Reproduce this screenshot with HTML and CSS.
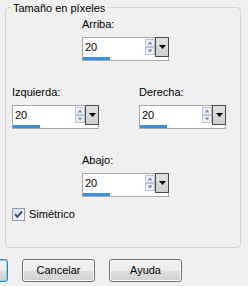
FILE: index.html
```html
<!DOCTYPE html>
<html>
<head>
<meta charset="utf-8">
<link rel="stylesheet" href="styles.css">
</head>
<body>
<div class="dialog">
  <div class="group">
    <span class="legend">Tamaño en píxeles</span>

    <div class="field field-center">
      <div class="label">Arriba:</div>
      <div class="spin">
        <div class="spin-main">
          <span class="spin-value">20</span>
          <svg class="spin-arrows" width="10" height="16" viewBox="0 0 10 16"><rect x="0.5" y="0.5" width="9" height="7" fill="#eef1f6" stroke="#bac3d3"/><rect x="0.5" y="8.5" width="9" height="7" fill="#eef1f6" stroke="#bac3d3"/><path d="M2.5 5.5 L5 2.5 L7.5 5.5Z" fill="#7d8fb4"/><path d="M2.5 10.5 L5 13.5 L7.5 10.5Z" fill="#7d8fb4"/></svg>
          <span class="spin-drop"><svg width="7" height="4" viewBox="0 0 7 4"><path d="M0 0 H7 L3.5 4Z" fill="#000"/></svg></span>
        </div>
        <div class="spin-bar"><span class="spin-fill" style="width:27px"></span></div>
      </div>
    </div>

    <div class="pair">
      <div class="field">
        <div class="label">Izquierda:</div>
        <div class="spin">
          <div class="spin-main">
            <span class="spin-value">20</span>
            <svg class="spin-arrows" width="10" height="16" viewBox="0 0 10 16"><rect x="0.5" y="0.5" width="9" height="7" fill="#eef1f6" stroke="#bac3d3"/><rect x="0.5" y="8.5" width="9" height="7" fill="#eef1f6" stroke="#bac3d3"/><path d="M2.5 5.5 L5 2.5 L7.5 5.5Z" fill="#7d8fb4"/><path d="M2.5 10.5 L5 13.5 L7.5 10.5Z" fill="#7d8fb4"/></svg>
            <span class="spin-drop"><svg width="7" height="4" viewBox="0 0 7 4"><path d="M0 0 H7 L3.5 4Z" fill="#000"/></svg></span>
          </div>
          <div class="spin-bar"><span class="spin-fill" style="width:27px"></span></div>
        </div>
      </div>
      <div class="field">
        <div class="label">Derecha:</div>
        <div class="spin">
          <div class="spin-main">
            <span class="spin-value">20</span>
            <svg class="spin-arrows" width="10" height="16" viewBox="0 0 10 16"><rect x="0.5" y="0.5" width="9" height="7" fill="#eef1f6" stroke="#bac3d3"/><rect x="0.5" y="8.5" width="9" height="7" fill="#eef1f6" stroke="#bac3d3"/><path d="M2.5 5.5 L5 2.5 L7.5 5.5Z" fill="#7d8fb4"/><path d="M2.5 10.5 L5 13.5 L7.5 10.5Z" fill="#7d8fb4"/></svg>
            <span class="spin-drop"><svg width="7" height="4" viewBox="0 0 7 4"><path d="M0 0 H7 L3.5 4Z" fill="#000"/></svg></span>
          </div>
          <div class="spin-bar"><span class="spin-fill" style="width:27px"></span></div>
        </div>
      </div>
    </div>

    <div class="field field-center field-bottom">
      <div class="label">Abajo:</div>
      <div class="spin">
        <div class="spin-main">
          <span class="spin-value">20</span>
          <svg class="spin-arrows" width="10" height="16" viewBox="0 0 10 16"><rect x="0.5" y="0.5" width="9" height="7" fill="#eef1f6" stroke="#bac3d3"/><rect x="0.5" y="8.5" width="9" height="7" fill="#eef1f6" stroke="#bac3d3"/><path d="M2.5 5.5 L5 2.5 L7.5 5.5Z" fill="#7d8fb4"/><path d="M2.5 10.5 L5 13.5 L7.5 10.5Z" fill="#7d8fb4"/></svg>
          <span class="spin-drop"><svg width="7" height="4" viewBox="0 0 7 4"><path d="M0 0 H7 L3.5 4Z" fill="#000"/></svg></span>
        </div>
        <div class="spin-bar"><span class="spin-fill" style="width:27px"></span></div>
      </div>
    </div>

    <div class="check">
      <svg class="check-box" width="13" height="13" viewBox="0 0 13 13"><defs><linearGradient id="cg" x1="0" y1="0" x2="1" y2="1"><stop offset="0" stop-color="#dfe3ea"/><stop offset="1" stop-color="#f7f8fa"/></linearGradient></defs><rect x="0.5" y="0.5" width="12" height="12" fill="url(#cg)" stroke="#8e9bb0"/><path d="M3 6.2 L5.3 8.8 L10 3.6" stroke="#33486e" stroke-width="1.9" fill="none"/></svg>
      <span>Simétrico</span>
    </div>
  </div>

  <div class="buttons">
    <span class="btn btn-default"></span>
    <span class="btn">Cancelar</span>
    <span class="btn">Ayuda</span>
  </div>
</div>
</body>
</html>
```

FILE: styles.css
```css
html, body {
  margin: 0;
  padding: 0;
}

body {
  width: 248px;
  height: 286px;
  overflow: hidden;
  background: #f0f0f0;
  color: #000;
  font-family: "Liberation Sans", Arial, sans-serif;
  font-size: 11px;
  line-height: 13px;
}

.dialog {
  padding-top: 7px;
}

.group {
  position: relative;
  margin-left: 5px;
  width: 236px;
  height: 241px;
  box-sizing: border-box;
  border: 1px solid #d4d4d4;
  border-radius: 4px;
  padding: 10px 0 0 6px;
}

.legend {
  position: absolute;
  top: -6px;
  left: 5px;
  padding: 0 2px;
  background: #f0f0f0;
  white-space: nowrap;
}

.field {
  width: 87px;
}

.field-center {
  margin-left: 70px;
}

.field-bottom {
  margin-top: 25px;
}

.label {
  margin-bottom: 6px;
  white-space: nowrap;
}

.pair {
  display: flex;
  gap: 40px;
  margin-top: 25px;
}

.spin {
  width: 87px;
  height: 24px;
  box-sizing: border-box;
  border: 1px solid #a7a7a7;
  background: #fff;
  display: flex;
  flex-direction: column;
}

.spin-main {
  display: flex;
  height: 18px;
}

.spin-value {
  flex: 1;
  padding-left: 2px;
  line-height: 18px;
}

.spin-arrows {
  display: block;
  margin-top: 1px;
}

.spin-drop {
  width: 14px;
  height: 20px;
  box-sizing: border-box;
  margin: -1px -1px 0 0;
  border: 1px solid #4a4a4a;
  background: linear-gradient(#e2e2e2, #cfcfcf);
  display: flex;
  align-items: center;
  justify-content: center;
}

.spin-drop svg {
  display: block;
}

.spin-bar {
  height: 3px;
  margin-top: 1px;
}

.spin-fill {
  display: block;
  height: 3px;
  background: #3a8ce5;
}

.check {
  display: flex;
  align-items: center;
  gap: 4px;
  margin-top: 11px;
  height: 13px;
}

.check-box {
  display: block;
}

.buttons {
  display: flex;
  gap: 14px;
  margin-top: 11px;
  margin-left: -65px;
}

.btn {
  flex: none;
  width: 73px;
  height: 23px;
  box-sizing: border-box;
  border: 1px solid #707070;
  border-radius: 3px;
  background: linear-gradient(#f3f3f3 0%, #ececec 50%, #dedede 51%, #d0d0d0 100%);
  box-shadow: inset 0 0 0 1px #fbfbfb;
  display: flex;
  align-items: center;
  justify-content: center;
  line-height: 13px;
}

.btn-default {
  border-color: #3c7fb1;
  box-shadow: inset 0 0 0 1px #7fd1f5;
}
```
